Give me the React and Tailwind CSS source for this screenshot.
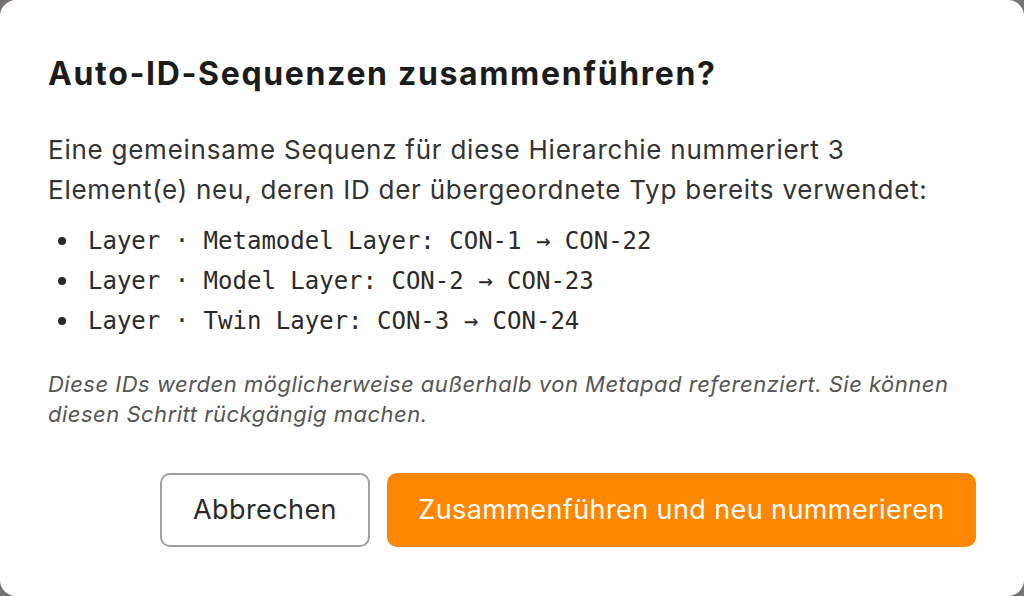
export default function App() {
  const items = [
    "Layer · Metamodel Layer: CON-1 → CON-22",
    "Layer · Model Layer: CON-2 → CON-23",
    "Layer · Twin Layer: CON-3 → CON-24",
  ];
  return (
    <div className="w-[1024px] h-[596px] bg-[#767270] overflow-hidden">
      <div
        className="w-full h-full bg-white rounded-2xl px-12 pt-[52px] flex flex-col"
        style={{ fontFamily: "Inter, 'Noto Sans', sans-serif" }}
      >
        <h2 className="text-[32px] leading-[44px] font-bold text-[#1c1c1c] tracking-[1.65px] whitespace-nowrap">
          Auto-ID-Sequenzen zusammenführen?
        </h2>
        <p className="mt-[34px] text-[26px] leading-[40px] text-[#333333] tracking-[0.75px] whitespace-nowrap">
          Eine gemeinsame Sequenz für diese Hierarchie nummeriert 3
          <br />
          Element(e) neu, deren ID der übergeordnete Typ bereits verwendet:
        </p>
        <ul
          className="mt-[11px] flex flex-col text-[24px] leading-[40px] text-[#2a2a2a]"
          style={{ fontFamily: "'DejaVu Sans Mono', 'Liberation Mono', monospace" }}
        >
          {items.map((t) => (
            <li key={t} className="flex items-center">
              <span className="w-[8px] h-[8px] rounded-full bg-[#2a2a2a] ml-[10px] mr-[22px]" />
              <span className="whitespace-nowrap">{t}</span>
            </li>
          ))}
        </ul>
        <p className="mt-[28px] text-[22px] leading-[30px] italic text-[#555555] tracking-[0.5px] whitespace-nowrap">
          Diese IDs werden möglicherweise außerhalb von Metapad referenziert. Sie können
          <br />
          diesen Schritt rückgängig machen.
        </p>
        <div className="mt-[44px] flex justify-end gap-[17px]">
          <button className="w-[210px] h-[74px] rounded-[10px] border-2 border-[#a0a0a0] bg-white text-[27px] tracking-[0.4px] text-[#2a2a2a]">
            Abbrechen
          </button>
          <button className="w-[589px] h-[74px] rounded-[10px] bg-[#ff8600] text-[27px] tracking-[0.4px] text-white">
            Zusammenführen und neu nummerieren
          </button>
        </div>
      </div>
    </div>
  );
}
